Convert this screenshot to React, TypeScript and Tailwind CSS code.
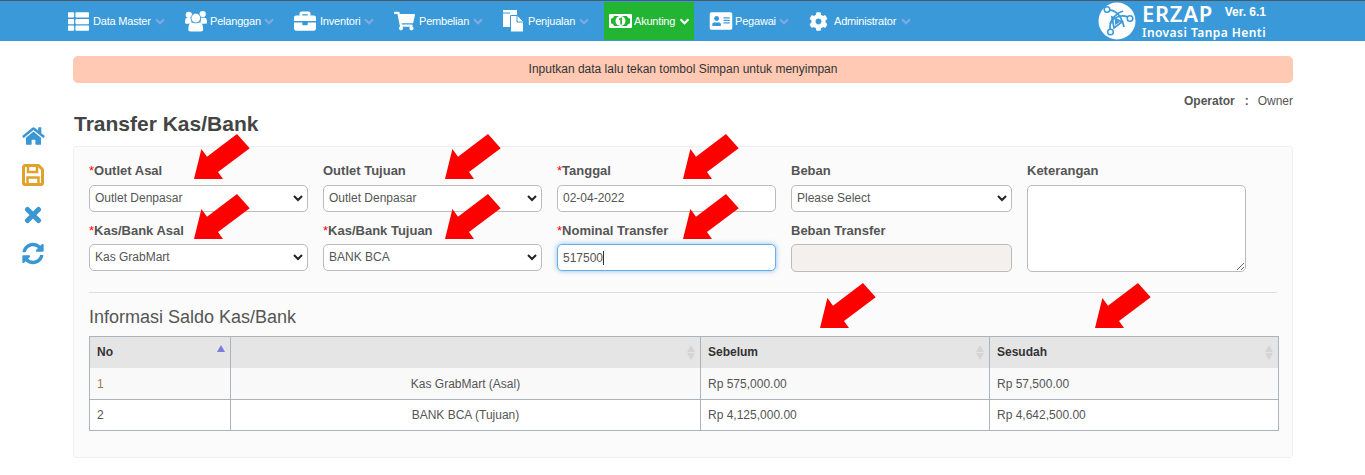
import React from "react";
import { FaThList, FaBriefcase, FaShoppingCart, FaAddressCard, FaCog, FaHome, FaSyncAlt } from "react-icons/fa";

const Users = () => (
  <svg viewBox="0 0 23 22" className="-mr-[1px] h-[22px] w-[22px]" fill="#fff">
    <circle cx="4" cy="4.500" r="3.300" />
    <circle cx="18.500" cy="3.800" r="3.300" />
    <path d="M0 12c0-3 .8-4.500 2.500-4.500h3.500l1 6.500H2c-1.500 0-2-.8-2-2zM23 12c0-3-.8-4.500-2.500-4.500H17l-1 6.500h5c1.500 0 2-.8 2-2z" />
    <circle cx="11.300" cy="8" r="5" stroke="#3a9ad9" strokeWidth="0.800" />
    <path d="M3.500 20c0-4 1-7 3.500-7.500 1.500 1 7 1 8.500 0 2.500.5 3.500 3.500 3.500 7.500 0 1.500-1 2-2.500 2H6c-1.500 0-2.500-.5-2.500-2z" />
  </svg>
);

const Files = () => (
  <svg viewBox="0 0 21 22" className="h-[22px] w-[21px]">
    <rect x="0" y="0" width="14" height="17" fill="#fff" />
    <path d="M0 2.500h7v1H0z" fill="#3a9ad9" />
    <path d="M7.500 5.500h7l6 6v10.500h-13z" fill="#fff" stroke="#3a9ad9" strokeWidth="1" />
    <path d="M14 6v6h6.500" fill="none" stroke="#3a9ad9" strokeWidth="1" />
  </svg>
);

const Money = () => (
  <svg viewBox="0 0 23 14" className="-mr-[2px] h-[14px] w-[23px]">
    <rect width="23" height="14" rx="1" fill="#fff" />
    <path d="M5 2h13c.3 1.500 1.200 2.200 3 2.500v5c-1.800.3-2.700 1-3 2.500H5c-.3-1.500-1.200-2.200-3-2.500v-5C3.800 4.200 4.700 3.500 5 2z" fill="#22b534" />
    <circle cx="11.500" cy="7" r="5" fill="#fff" />
    <path d="M10 4.700l2-1.200h1v7h-1.700V5.600l-1.300.6z" fill="#22b534" />
  </svg>
);

const Logo = () => (
  <svg viewBox="0 0 38 38" className="h-[38px] w-[38px] shrink-0">
    <circle cx="19" cy="19" r="18.500" fill="#fff" />
    <g fill="none" stroke="#3a9ad9" strokeWidth="1.800">
      <path d="M9 8C15 7 23 11 26 25" />
      <path d="M33 17C26 11 16 14 12 22" />
      <path d="M13 30C10 23 14 13 25 9" />
      <path d="M14 15l10 5-8 6z" />
    </g>
    <path d="M17 17l5 3-5 3z" fill="#3a9ad9" />
    <g fill="#fff" stroke="#3a9ad9" strokeWidth="1.500">
      <circle cx="9" cy="7.500" r="2.800" />
      <circle cx="32" cy="16.500" r="2.800" />
      <circle cx="12.500" cy="30" r="2.800" />
    </g>
  </svg>
);

const SaveIcon = () => (
  <svg viewBox="0 0 22 22" className="mt-[18px] h-[22px] w-[22px]" fill="none" stroke="#dfa32d">
    <path d="M1.500 3a1.500 1.500 0 0 1 1.500-1.500h13.500l4 4V19a1.500 1.500 0 0 1-1.500 1.500H3A1.500 1.500 0 0 1 1.500 19z" strokeWidth="3" />
    <path d="M6 1.500v6.500h9V1.500" strokeWidth="2.500" />
    <path d="M5.500 20v-6.500h11V20" strokeWidth="2.500" />
  </svg>
);

const TimesIcon = () => (
  <svg viewBox="0 0 18 18" className="ml-[2px] mt-[20px] h-[18px] w-[18px]" stroke="#3a97d4" strokeWidth="5" strokeLinecap="round">
    <path d="M3.500 3.500l11 11M14.500 3.500l-11 11" />
  </svg>
);

function Chevron({ active }: { active?: boolean }) {
  return (
    <svg viewBox="0 0 10 7" className={active ? "ml-[3px] h-[7px] w-[11px] shrink-0" : "ml-[4px] h-[7px] w-[10px] shrink-0"} fill="none" stroke={active ? "#fff" : "#7fa9e0"} strokeWidth="2.200">
      <path d="M1 1.200l4 4 4-4" />
    </svg>
  );
}

function NavItem({ icon, label, active, widthClass }: { icon: React.ReactNode; label: string; active?: boolean; widthClass: string }) {
  return (
    <div className={active ? "-mx-[5px] flex h-[38px] items-center bg-[#22b534] pl-[5px] pr-[4px]" : "flex h-[38px] items-center"}>
      {icon}
      <span className={"ml-[4px] whitespace-nowrap text-[11px] leading-none tracking-[-0.2px] text-white " + widthClass}>{label}</span>
      <Chevron active={active} />
    </div>
  );
}

function Arrow({ className }: { className: string }) {
  return (
    <svg viewBox="0 0 56 45" className={"absolute h-[45px] w-[56px] " + className} fill="#ff0000">
      <polygon points="0,45 7.400,15 13,22.700 43,0 55.700,14.300 24,38 29,45" />
    </svg>
  );
}

function Label({ text, req, tall }: { text: string; req?: boolean; tall?: boolean }) {
  return (
    <label className={(tall ? "h-[23px]" : "h-[22px]") + " block pt-[1px] text-[13px] font-bold leading-[16px] text-[#555]"}>
      {req && <span className="font-normal text-[#ff0000]">*</span>}
      {text}
    </label>
  );
}

const controlBase = "block w-full rounded-[5px] border border-[#bbb] text-[12px] text-[#555] outline-none";

function Select({ value }: { value: string }) {
  return (
    <div className="relative">
      <select defaultValue={value} className={controlBase + " h-[27px] appearance-none bg-white pb-[2px] pl-[5px] pr-[20px]"}>
        <option>{value}</option>
      </select>
      <svg viewBox="0 0 10 7" className="pointer-events-none absolute right-[5px] top-[10px] h-[7px] w-[10px]" fill="none" stroke="#222" strokeWidth="2">
        <path d="M1 1l4 4 4-4" />
      </svg>
    </div>
  );
}

function SortIcon({ only }: { only?: boolean }) {
  if (only) {
    return <span className="mt-[-8px] h-0 w-0 border-x-[4px] border-b-[7px] border-x-transparent border-b-[#7b7be0]" />;
  }
  return (
    <span className="flex flex-col gap-[1px]">
      <span className="h-0 w-0 border-x-[4px] border-b-[7px] border-x-transparent border-b-[#d4d4d4]" />
      <span className="h-0 w-0 border-x-[4px] border-t-[7px] border-x-transparent border-t-[#d4d4d4]" />
    </span>
  );
}

function Th({ label, only, className }: { label?: string; only?: boolean; className: string }) {
  return (
    <th className={"border border-b-0 border-[#aab4bc] bg-[#e5e5e5] p-0 text-left text-[12px] font-bold text-[#333] " + className}>
      <div className="flex h-[31px] items-center justify-between pb-[1px] pl-[7px] pr-[5px]">
        <span>{label}</span>
        <SortIcon only={only} />
      </div>
    </th>
  );
}

function Td({ children, center, first }: { children: React.ReactNode; center?: boolean; first?: boolean }) {
  return (
    <td className={"h-[31px] border border-[#aab4bc] px-[7px] pb-0 pt-[1px] text-[12px] text-[#555] " + (center ? "text-center" : "text-left") + (first ? " border-t-0" : "")}>
      {children}
    </td>
  );
}

export default function App() {
  return (
    <div className="relative h-[475px] w-[1365px] overflow-hidden bg-white font-['Liberation_Sans',Arial,sans-serif]">
      <header className="flex h-[41px] items-center border-t border-t-[#4a5a68] bg-[#3a9ad9] pl-[68px]">
        <nav className="flex items-center gap-[20px] self-start pt-[1px]">
          <NavItem widthClass="w-[58px]" icon={<FaThList className="h-[21px] w-[21px] text-white" />} label="Data Master" />
          <NavItem widthClass="w-[50px]" icon={<Users />} label="Pelanggan" />
          <NavItem widthClass="w-[40px]" icon={<FaBriefcase className="h-[22px] w-[22px] text-white" />} label="Inventori" />
          <NavItem widthClass="w-[50px]" icon={<FaShoppingCart className="h-[20px] w-[21px] text-white" />} label="Pembelian" />
          <NavItem widthClass="w-[47px]" icon={<Files />} label="Penjualan" />
          <NavItem widthClass="w-[42px]" active icon={<Money />} label="Akunting" />
          <NavItem widthClass="w-[40px]" icon={<FaAddressCard className="-mr-[2px] h-[20px] w-[24px] text-white" />} label="Pegawai" />
          <NavItem widthClass="w-[63px]" icon={<FaCog className="mr-[2px] h-[19px] w-[19px] text-white" />} label="Administrator" />
        </nav>
        <div className="ml-auto mr-[99px] flex items-center">
          <Logo />
          <div className="ml-[5px] w-[125px] font-['Noto_Sans',sans-serif] text-white">
            <div className="flex h-[22px] items-center">
              <span className="ml-[1px] w-[85px] text-[22px] font-semibold leading-none tracking-[0.7px]">ERZAP</span>
              <span className="-mt-[2px] whitespace-nowrap font-['Liberation_Sans',sans-serif] text-[12px] font-bold">Ver. 6.1</span>
            </div>
            <div className="ml-[1px] mt-[2px] whitespace-nowrap text-[12px] font-semibold leading-[14px] tracking-[0.45px]">Inovasi Tanpa Henti</div>
          </div>
        </div>
      </header>

      <div className="flex">
        <aside className="flex w-[73px] shrink-0 flex-col pl-[22px] pt-[85px]">
          <FaHome className="h-[20px] w-[23px] text-[#3a97d4]" />
          <SaveIcon />
          <TimesIcon />
          <FaSyncAlt className="mt-[18px] h-[23px] w-[22px] text-[#3a97d4]" />
        </aside>

        <main className="w-[1220px]">
          <div className="mt-[15px] flex h-[27px] items-center justify-center rounded-[5px] bg-[#ffc9b4] pb-[1px] text-[12px] text-[#333]">
            Inputkan data lalu tekan tombol Simpan untuk menyimpan
          </div>
          <div className="mt-[10px] flex h-[16px] items-center justify-end text-[12px] text-[#555]">
            <span className="font-bold">Operator</span>
            <span className="ml-[10px] font-bold">:</span>
            <span className="ml-[9px]">Owner</span>
          </div>
          <h1 className="ml-[1px] mt-[1px] h-[28px] text-[21px] font-bold leading-[28px] text-[#444]">Transfer Kas/Bank</h1>
          <section className="mt-[8px] rounded-[3px] border border-[#f0f0f0] bg-[#fbfbfb] pb-[26px] pl-[15px] pr-[15px] pt-[15px]">
            <div className="grid grid-cols-[219px_219px_219px_221px_219px] gap-x-[15px] gap-y-[10px]">
              <div>
                <Label text="Outlet Asal" req tall />
                <Select value="Outlet Denpasar" />
              </div>
              <div>
                <Label text="Outlet Tujuan" tall />
                <Select value="Outlet Denpasar" />
              </div>
              <div>
                <Label text="Tanggal" req tall />
                <input readOnly value="02-04-2022" className={controlBase + " h-[27px] bg-white px-[5px] pb-[2px]"} />
              </div>
              <div>
                <Label text="Beban" tall />
                <Select value="Please Select" />
              </div>
              <div className="row-span-2 flex flex-col">
                <Label text="Keterangan" tall />
                <textarea className={controlBase + " h-[87px] resize-y bg-white"} />
              </div>
              <div>
                <Label text="Kas/Bank Asal" req />
                <Select value="Kas GrabMart" />
              </div>
              <div>
                <Label text="Kas/Bank Tujuan" req />
                <Select value="BANK BCA" />
              </div>
              <div>
                <Label text="Nominal Transfer" req />
                <div className="flex h-[27px] w-full items-center rounded-[5px] border border-[#66afe9] bg-white px-[5px] text-[12px] text-[#555] shadow-[0_0_5px_rgba(102,175,233,0.8)]">
                  <span>517500</span>
                  <span className="h-[14px] w-px bg-[#333]" />
                </div>
              </div>
              <div>
                <Label text="Beban Transfer" />
                <input disabled className={controlBase + " h-[28px] bg-[#f3f0ee]"} />
              </div>
            </div>
            <hr className="mt-[20px] border-t border-[#ddd]" />
            <h2 className="mt-[13px] h-[22px] text-[18px] font-normal leading-[23px] text-[#555]">Informasi Saldo Kas/Bank</h2>
            <table className="mt-[8px] w-[1189px] table-fixed border-collapse">
              <thead>
                <tr>
                  <Th label="No" only className="w-[141px]" />
                  <Th className="w-[470px]" />
                  <Th label="Sebelum" className="w-[289px]" />
                  <Th label="Sesudah" className="w-[289px]" />
                </tr>
              </thead>
              <tbody>
                <tr className="bg-[#f9f9f9]">
                  <Td first><span className="text-[#9a7b4f]">1</span></Td>
                  <Td first center>Kas GrabMart (Asal)</Td>
                  <Td first>Rp 575,000.00</Td>
                  <Td first>Rp 57,500.00</Td>
                </tr>
                <tr className="bg-white">
                  <Td>2</Td>
                  <Td center>BANK BCA (Tujuan)</Td>
                  <Td>Rp 4,125,000.00</Td>
                  <Td>Rp 4,642,500.00</Td>
                </tr>
              </tbody>
            </table>
          </section>
        </main>
      </div>

      <Arrow className="left-[194px] top-[134px]" />
      <Arrow className="left-[445px] top-[134px]" />
      <Arrow className="left-[683px] top-[134px]" />
      <Arrow className="left-[194px] top-[194px]" />
      <Arrow className="left-[445px] top-[194px]" />
      <Arrow className="left-[683px] top-[194px]" />
      <Arrow className="left-[820px] top-[283px]" />
      <Arrow className="left-[1095px] top-[283px]" />
    </div>
  );
}
